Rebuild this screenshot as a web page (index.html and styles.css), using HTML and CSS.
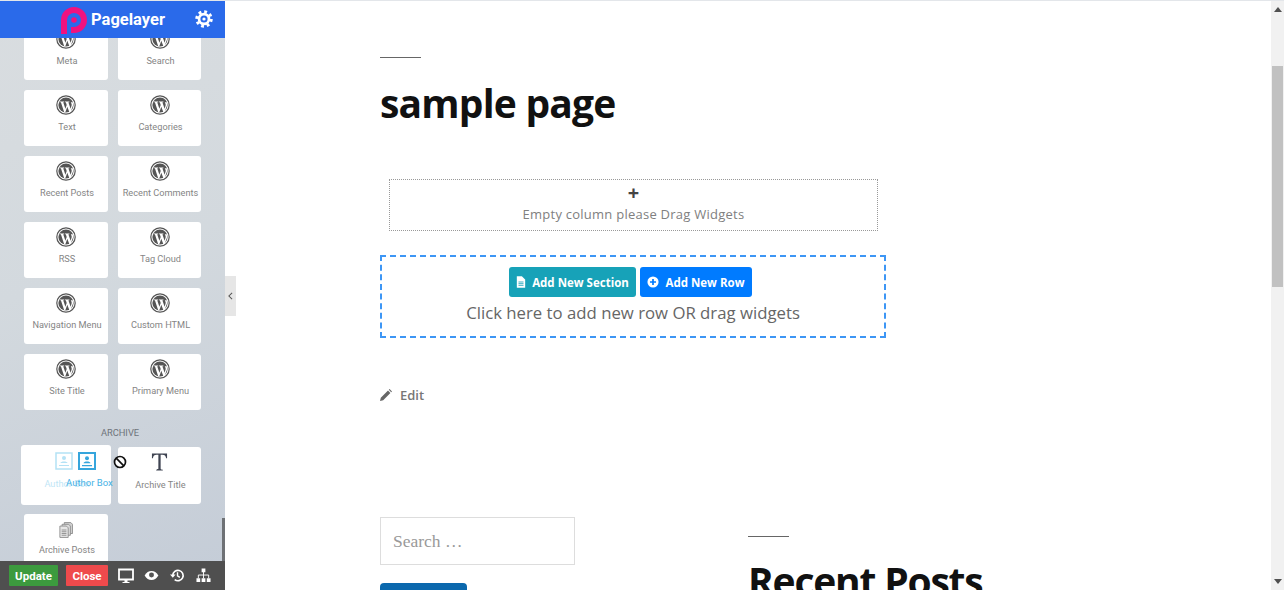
FILE: index.html
```html
<!DOCTYPE html>
<html>
  <head>
    <title>Pagelayer Editor</title>
    <link rel="stylesheet" href="styles.css">
  </head>
  <body>
    <svg class="icon-defs" width="0" height="0">
      <symbol id="wp" viewBox="0 0 20 20">
        <circle cx="10" cy="10" r="9.2" fill="none" stroke="#555" stroke-width="1.2"/>
        <circle cx="10" cy="10" r="7.6" fill="#555"/>
        <path d="M3.6 6.6h4.6v.7H7.2l2.2 6.4 1.3-3.7-.9-2.7h-.8v-.7h4.4v.7h-1l2.2 6.4 1-3.2c.4-1.3-.4-2.2-.8-3.2h2l.4 2.6-2.6 7-1.2.3-2.1-5.4-2 5.4-1.2-.3L4.900 7.300H3.600z" fill="#fff"/>
      </symbol>
    </svg>

    <div class="editor">
      <aside class="sidebar">
        <header class="side-head">
          <svg class="logo" viewBox="0 0 28 28" width="28" height="28">
            <path d="M1 27V13a13 13 0 1 1 13 13h-3v-6h3a7 7 0 1 0-7-7v14z" fill="#f0127f"/>
            <circle cx="14" cy="13" r="2.800" fill="#f0127f"/>
          </svg>
          <span class="brand">Pagelayer</span>
          <svg class="gear" viewBox="0 0 20 20" width="18" height="18">
            <circle cx="10" cy="10" r="5.500" fill="none" stroke="#fff" stroke-width="3"/>
            <circle cx="10" cy="10" r="8" fill="none" stroke="#fff" stroke-width="3.400" stroke-dasharray="3.100 3.180"/>
            <circle cx="10" cy="10" r="1.800" fill="#fff"/>
          </svg>
        </header>

        <div class="widgets">
          <div class="grid">
            <div class="card"><svg class="wp"><use href="#wp"/></svg><span>Meta</span></div>
            <div class="card"><svg class="wp"><use href="#wp"/></svg><span>Search</span></div>
            <div class="card"><svg class="wp"><use href="#wp"/></svg><span>Text</span></div>
            <div class="card"><svg class="wp"><use href="#wp"/></svg><span>Categories</span></div>
            <div class="card"><svg class="wp"><use href="#wp"/></svg><span>Recent Posts</span></div>
            <div class="card"><svg class="wp"><use href="#wp"/></svg><span>Recent Comments</span></div>
            <div class="card"><svg class="wp"><use href="#wp"/></svg><span>RSS</span></div>
            <div class="card"><svg class="wp"><use href="#wp"/></svg><span>Tag Cloud</span></div>
            <div class="card"><svg class="wp"><use href="#wp"/></svg><span>Navigation Menu</span></div>
            <div class="card"><svg class="wp"><use href="#wp"/></svg><span>Custom HTML</span></div>
            <div class="card"><svg class="wp"><use href="#wp"/></svg><span>Site Title</span></div>
            <div class="card"><svg class="wp"><use href="#wp"/></svg><span>Primary Menu</span></div>
          </div>

          <h5 class="group-title">ARCHIVE</h5>

          <div class="grid grid-archive">
            <div class="card card-ghost">
              <svg class="box-icon faded" viewBox="0 0 18 18" width="18" height="18">
                <rect x="1" y="1" width="16" height="16" fill="none" stroke="#b4e2f5" stroke-width="1.500"/>
                <circle cx="9" cy="6" r="2" fill="#b4e2f5"/>
                <path d="M5.500 11c0-2 7-2 7 0zM4 13h10v1H4z" fill="#b4e2f5"/>
              </svg>
              <span class="faded-label">Author Box</span>
            </div>
            <div class="card">
              <svg class="t-icon" viewBox="0 0 18 20" width="17" height="20">
                <path d="M1 1h16v5h-1c-.3-2.500-1.500-3.700-4-3.700h-1.800v14.500c0 .9.600 1.200 2.300 1.300v.9H5.500v-.9c1.700-.1 2.300-.4 2.300-1.300V2.300H6c-2.500 0-3.700 1.200-4 3.700H1z" fill="#3f4452"/>
              </svg>
              <span>Archive Title</span>
            </div>
            <div class="card">
              <svg class="docs-icon" viewBox="0 0 16 18" width="14" height="16">
                <path d="M6 .500h7.500l2 2V13H6z" fill="#cfcfcf" stroke="#8a8a8a"/>
                <path d="M3.500 2.500H11l2 2V15H3.500z" fill="#dcdcdc" stroke="#8a8a8a"/>
                <path d="M1 4.500h7.500l2 2v11H1z" fill="#e6e6e6" stroke="#8a8a8a"/>
                <path d="M3 9h5.500M3 11h5.500M3 13h5.500M3 15h5.500" stroke="#8a8a8a"/>
              </svg>
              <span>Archive Posts</span>
            </div>
          </div>
        </div>

        <i class="side-scroll"></i>

        <!-- widget being dragged -->
        <div class="drag-item">
          <svg viewBox="0 0 18 18" width="18" height="18">
            <rect x="1" y="1" width="16" height="16" fill="#fff" stroke="#36a5dc" stroke-width="2"/>
            <circle cx="9" cy="6.300" r="2" fill="#36a5dc"/>
            <path d="M5.500 11.300c0-2.300 7-2.300 7 0zM4 13h10v1.200H4z" fill="#36a5dc"/>
          </svg>
          <span>Author Box</span>
        </div>
        <svg class="no-drop" viewBox="0 0 14 14" width="14" height="14">
          <circle cx="7" cy="7" r="5.500" fill="#fff" stroke="#111" stroke-width="1.700"/>
          <path d="M3.200 3.200l7.600 7.600" stroke="#111" stroke-width="1.700"/>
        </svg>

        <footer class="side-foot">
          <button class="btn-update">Update</button>
          <button class="btn-close">Close</button>
          <svg viewBox="0 0 16 16" width="16" height="16" class="foot-icon">
            <path d="M1 1.500h14v10H1z" fill="none" stroke="#fff" stroke-width="1.800"/>
            <path d="M6.500 12h3v2h2v1h-7v-1h2z" fill="#fff"/>
          </svg>
          <svg viewBox="0 0 16 12" width="15" height="11" class="foot-icon">
            <path d="M.5 6C2.500 2.500 5 1 8 1s5.500 1.500 7.500 5c-2 3.500-4.500 5-7.500 5S2.500 9.500.5 6z" fill="#fff"/>
            <circle cx="8" cy="5.500" r="2.700" fill="#555"/>
          </svg>
          <svg viewBox="0 0 16 16" width="15" height="15" class="foot-icon">
            <path d="M3 8a5.500 5.500 0 1 1 2 4.300" fill="none" stroke="#fff" stroke-width="1.700"/>
            <path d="M0 6.800h6L3 10.300z" fill="#fff"/>
            <path d="M8 4.500v4l2.500 1.500" fill="none" stroke="#fff" stroke-width="1.500"/>
          </svg>
          <svg viewBox="0 0 16 16" width="15" height="15" class="foot-icon">
            <path d="M6 .500h4v4H6zM.500 11h4v4h-4zM6 11h4v4H6zM11.500 11h4v4h-4z" fill="#fff"/>
            <path d="M8 4v7M2.500 11V7.500h11V11" fill="none" stroke="#fff"/>
          </svg>
        </footer>
      </aside>

      <div class="collapse-tab">
        <svg viewBox="0 0 6 10" width="5" height="8"><path d="M5 1L1 5l4 4" fill="none" stroke="#555" stroke-width="1.300"/></svg>
      </div>

      <main class="page">
        <div class="content">
          <hr class="rule">
          <h1 class="title">sample page</h1>

          <div class="empty-col">
            <b class="plus">+</b>
            <span>Empty column please Drag Widgets</span>
          </div>

          <div class="add-row">
            <div class="add-btns">
              <button class="btn-section">
                <svg viewBox="0 0 12 14" width="10" height="12">
                  <path d="M1 0h6l4 4v10H1z" fill="#fff"/>
                  <path d="M3 7h6M3 9h6M3 11h6" stroke="#17a2b8"/>
                </svg>
                Add New Section
              </button>
              <button class="btn-row">
                <svg viewBox="0 0 14 14" width="12" height="12">
                  <circle cx="7" cy="7" r="6.500" fill="#fff"/>
                  <path d="M7 3.500v7M3.500 7h7" stroke="#007bff" stroke-width="2"/>
                </svg>
                Add New Row
              </button>
            </div>
            <p>Click here to add new row OR drag widgets</p>
          </div>

          <a class="edit-link">
            <svg viewBox="0 0 12 12" width="12" height="12"><path d="M0 12l.8-3.200L8 1.600l2.400 2.400-7.200 7.200zM8.800.8l.8-.8L12 2.400l-.8.800z" fill="#666"/></svg>
            Edit
          </a>

          <div class="widgets-row">
            <div class="col">
              <div class="search-box">Search …</div>
              <div class="search-btn"></div>
            </div>
            <div class="col">
              <hr class="rule rule-sm">
              <h2 class="recent">Recent Posts</h2>
            </div>
          </div>
        </div>

        <div class="scrollbar">
          <svg viewBox="0 0 8 5" width="8" height="5"><path d="M4 0l4 5H0z" fill="#505050"/></svg>
          <div class="track"><div class="thumb"></div></div>
          <svg viewBox="0 0 8 5" width="8" height="5"><path d="M0 0h8L4 5z" fill="#505050"/></svg>
        </div>
      </main>
    </div>
  </body>
</html>
```

FILE: styles.css
```css
html,
body {
  margin: 0;
  height: 590px;
  overflow: hidden;
  background: #fff;
}
.icon-defs {
  position: absolute;
}
.editor {
  display: flex;
  height: 590px;
  border-top: 1px solid #e3e6ea;
  box-sizing: border-box;
  position: relative;
}

/* left panel */
.sidebar {
  width: 225px;
  flex: none;
  position: relative;
  display: flex;
  flex-direction: column;
  overflow: hidden;
  background: linear-gradient(160deg, #d9dde0 0%, #d3d9de 45%, #c4ccd7 100%);
  font-family: Roboto, sans-serif;
}
.side-head {
  height: 37px;
  flex: none;
  background: #2a6aea;
  display: flex;
  align-items: center;
  padding-left: 60px;
  position: relative;
  z-index: 2;
}
.logo {
  margin-top: 2px;
}
.brand {
  color: #fff;
  font-weight: 700;
  font-size: 16.500px;
  margin-left: 3px;
}
.gear {
  margin-left: 30px;
  margin-top: -1px;
}
.widgets {
  flex: 1;
  min-height: 0;
  overflow: hidden;
  padding: 0 24px;
  margin-top: -14px;
}
.grid {
  display: grid;
  grid-template-columns: 84px 83px;
  grid-auto-rows: 56px;
  column-gap: 10px;
  row-gap: 10px;
}
.grid-archive {
  grid-auto-rows: 57px;
}
.card {
  background: #fff;
  border-radius: 3px;
  display: flex;
  flex-direction: column;
  align-items: center;
  color: #858585;
  font-size: 9.200px;
  white-space: nowrap;
}
.card span {
  margin: 6px 0 0 2px;
}
.wp {
  width: 20px;
  height: 20px;
  margin-top: 5px;
}
.group-title {
  margin: 0;
  height: 37px;
  line-height: 46px;
  padding-left: 15px;
  text-align: center;
  font-size: 9.300px;
  font-weight: 400;
  color: #6e737a;
}
.card-ghost {
  margin: -2px 0 0 -3px;
  width: 90px;
  height: 60px;
}
.box-icon {
  margin: 7px 0 0 -5px;
}
.card .faded-label {
  color: #bfe6f6;
  margin-top: 8px;
}
.t-icon {
  margin-top: 5px;
}
.t-icon + span {
  margin-top: 7px;
}
.docs-icon {
  margin-top: 8px;
}
.card .docs-icon + span {
  margin-top: 6px;
}
.drag-item {
  position: absolute;
  left: 66px;
  top: 451px;
  display: flex;
  flex-direction: column;
  align-items: center;
  font-size: 9.500px;
  color: #45b2e6;
}
.drag-item svg {
  margin-left: -4px;
}
.drag-item span {
  margin-top: 7px;
}
.no-drop {
  position: absolute;
  left: 113px;
  top: 454px;
}
.side-scroll {
  position: absolute;
  right: 0;
  top: 517px;
  width: 3px;
  height: 44px;
  background: #6e7175;
}
.side-foot {
  position: absolute;
  left: 0;
  right: 0;
  bottom: 0;
  height: 29px;
  background: #4f4f4f;
  display: flex;
  align-items: center;
  padding-left: 9px;
  box-sizing: border-box;
}
.side-foot button {
  border: 0;
  height: 21px;
  padding: 0;
  color: #fff;
  font-family: Roboto, sans-serif;
  font-weight: 700;
  font-size: 11.500px;
  border-radius: 1px;
}
.btn-update {
  width: 49px;
  background: #3c9a3e;
}
.btn-close {
  width: 42px;
  margin-left: 8px;
  background: #ef4a4c;
}
.foot-icon {
  margin-left: 11px;
}
.btn-close + .foot-icon,
.btn-close + .foot-icon + .foot-icon {
  margin-left: 10px;
}
.collapse-tab {
  position: absolute;
  left: 225px;
  top: 275px;
  width: 11px;
  height: 40px;
  background: #e6e6e6;
  display: flex;
  align-items: center;
  justify-content: center;
}

/* page being edited */
.page {
  flex: 1;
  display: flex;
  min-width: 0;
}
.content {
  flex: 1;
  min-width: 0;
  padding: 56px 0 0 155px;
  font-family: "Open Sans", sans-serif;
}
.rule {
  width: 41px;
  height: 1px;
  margin: 0;
  border: 0;
  background: #666;
}
.title {
  margin: 19px 0 0;
  font-size: 39px;
  line-height: 52px;
  font-weight: 700;
  color: #111;
  letter-spacing: -0.800px;
}
.empty-col {
  box-sizing: border-box;
  width: 489px;
  height: 52px;
  margin: 50px 0 0 9px;
  padding-top: 1px;
  border: 1px dotted #999;
  display: flex;
  flex-direction: column;
  align-items: center;
  color: #808080;
  font-size: 13px;
  letter-spacing: 0.250px;
}
.plus {
  font-size: 20px;
  line-height: 24px;
  color: #444;
}
.empty-col span {
  line-height: 18px;
}
.add-row {
  box-sizing: border-box;
  width: 506px;
  height: 83px;
  margin-top: 24px;
  border: 2px dashed #3d96f5;
  padding-top: 10px;
  text-align: center;
}
.add-btns {
  display: flex;
  justify-content: center;
  gap: 4px;
  padding-right: 5px;
}
.add-btns button {
  height: 30px;
  border: 0;
  border-radius: 3px;
  color: #fff;
  font-family: "Open Sans", sans-serif;
  font-weight: 700;
  font-size: 11.500px;
  display: flex;
  align-items: center;
  justify-content: center;
  gap: 6px;
  padding: 0;
}
.btn-section {
  width: 127px;
  background: #17a2b8;
}
.btn-row {
  width: 112px;
  background: #007bff;
}
.add-row p {
  margin: 4px 0 0;
  font-size: 16.750px;
  line-height: 24px;
  color: #666;
}
.edit-link {
  display: flex;
  align-items: center;
  gap: 8px;
  margin-top: 48px;
  height: 18px;
  font-size: 13px;
  font-weight: 600;
  color: #777;
}
.widgets-row {
  display: flex;
  margin-top: 113px;
}
.col {
  width: 368px;
}
.search-box {
  box-sizing: border-box;
  width: 195px;
  height: 48px;
  border: 1px solid #ddd;
  padding-left: 12px;
  font-family: "Liberation Serif", serif;
  font-size: 17.500px;
  line-height: 46px;
  color: #999;
}
.search-btn {
  width: 87px;
  height: 30px;
  margin-top: 18px;
  border-radius: 4px;
  background: #0b68ad;
}
.rule-sm {
  margin-top: 19px;
}
.recent {
  margin: 18px 0 0;
  font-size: 39px;
  line-height: 52px;
  font-weight: 700;
  color: #111;
  letter-spacing: -1.200px;
}
.scrollbar {
  width: 13px;
  flex: none;
  background: #f1f1f1;
  display: flex;
  flex-direction: column;
  align-items: center;
  padding: 6px 0;
  box-sizing: border-box;
  justify-content: space-between;
}
.track {
  flex: 1;
  width: 100%;
  padding-top: 54px;
}
.thumb {
  width: 11px;
  height: 221px;
  margin-left: 1px;
  background: #c1c1c1;
}
```
